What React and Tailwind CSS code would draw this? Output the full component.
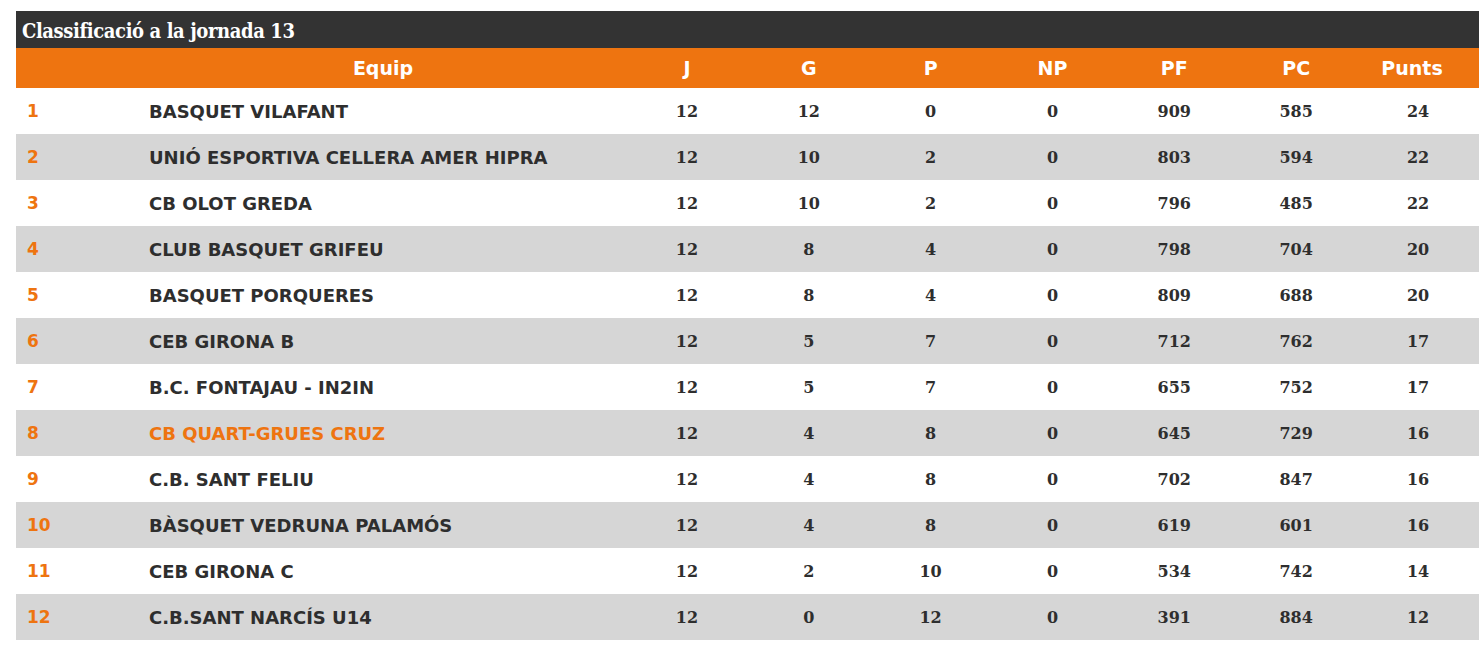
const rows = [
  [1, 'BASQUET VILAFANT', 12, 12, 0, 0, 909, 585, 24],
  [2, 'UNIÓ ESPORTIVA CELLERA AMER HIPRA', 12, 10, 2, 0, 803, 594, 22],
  [3, 'CB OLOT GREDA', 12, 10, 2, 0, 796, 485, 22],
  [4, 'CLUB BASQUET GRIFEU', 12, 8, 4, 0, 798, 704, 20],
  [5, 'BASQUET PORQUERES', 12, 8, 4, 0, 809, 688, 20],
  [6, 'CEB GIRONA B', 12, 5, 7, 0, 712, 762, 17],
  [7, 'B.C. FONTAJAU - IN2IN', 12, 5, 7, 0, 655, 752, 17],
  [8, 'CB QUART-GRUES CRUZ', 12, 4, 8, 0, 645, 729, 16],
  [9, 'C.B. SANT FELIU', 12, 4, 8, 0, 702, 847, 16],
  [10, 'BÀSQUET VEDRUNA PALAMÓS', 12, 4, 8, 0, 619, 601, 16],
  [11, 'CEB GIRONA C', 12, 2, 10, 0, 534, 742, 14],
  [12, 'C.B.SANT NARCÍS U14', 12, 0, 12, 0, 391, 884, 12],
];

const heads = ['J', 'G', 'P', 'NP', 'PF', 'PC', 'Punts'];

export default function App() {
  return (
    <div className="min-h-screen bg-white pt-[11px] px-4">
      <div className="w-[1463px]">
        <div className="h-[37px] bg-[#333333] flex items-center px-[6px] pt-[2px]">
          <h2 className="text-white font-bold text-[20px] tracking-[-0.4px] font-['DejaVu_Serif_Condensed','DejaVu_Serif',serif]">
            Classificació a la jornada 13
          </h2>
        </div>
        <table className="w-full table-fixed border-collapse font-['DejaVu_Sans','Verdana',sans-serif]">
          <colgroup>
            <col className="w-[124px]" />
            <col className="w-[486px]" />
            {heads.map((h) => (
              <col key={h} />
            ))}
          </colgroup>
          <thead>
            <tr className="h-[40px] bg-[#ee7410] text-white text-[19px] font-bold">
              <th></th>
              <th className="text-center">Equip</th>
              {heads.map((h) => (
                <th key={h} className={`text-center ${h === 'Punts' ? 'pr-[12px]' : ''}`}>{h}</th>
              ))}
            </tr>
          </thead>
          <tbody>
            {rows.map((r, i) => {
              const mine = r[0] === 8;
              return (
                <tr key={r[0]} className={`h-[46px] ${i % 2 ? 'bg-[#d6d6d6]' : 'bg-white'}`}>
                  <td className="pl-[11px] pt-[2px] text-[17px] font-bold text-[#ee7410]">{r[0]}</td>
                  <td
                    className={`pl-[9px] pt-[1px] text-[18px] font-bold ${mine ? 'text-[#ee7410]' : 'text-[#2e2e2e]'}`}
                  >
                    {r[1]}
                  </td>
                  {r.slice(2).map((v, j) => (
                    <td
                      key={j}
                      className="pt-[2px] text-center text-[16px] font-bold text-[#2e2e2e] font-['DejaVu_Serif',serif]"
                    >
                      {v}
                    </td>
                  ))}
                </tr>
              );
            })}
          </tbody>
        </table>
      </div>
    </div>
  );
}
